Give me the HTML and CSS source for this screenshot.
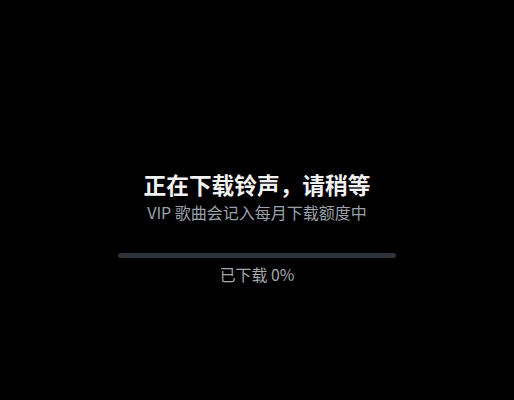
FILE: index.html
```html
<!DOCTYPE html>
<html lang="zh">
<head>
<meta charset="utf-8">
<link rel="stylesheet" href="styles.css">
</head>
<body>
<main class="screen">
  <h1 class="title">正在下载铃声，请稍等</h1>
  <p class="subtitle">VIP 歌曲会记入每月下载额度中</p>
  <div class="track"><div class="fill" style="width:0%"></div></div>
  <p class="label">已下载 0%</p>
</main>
</body>
</html>
```
FILE: styles.css
```css
html, body {
  margin: 0;
  padding: 0;
  background: #000;
}
.screen {
  width: 514px;
  height: 400px;
  display: flex;
  flex-direction: column;
  align-items: center;
  padding-top: 172px;
  box-sizing: border-box;
  font-family: "Noto Sans CJK SC", "Noto Sans", sans-serif;
}
.title {
  margin: 0;
  font-size: 22.7px;
  line-height: 26px;
  font-weight: 700;
  color: #f2f2f2;
}
.subtitle {
  margin: 5px 0 0;
  font-size: 16px;
  line-height: 19px;
  color: #9aa2ab;
}
.track {
  margin-top: 31px;
  width: 278px;
  height: 5px;
  border-radius: 3px;
  background: #2e3339;
  overflow: hidden;
}
.fill {
  height: 100%;
  background: #4a90e2;
}
.label {
  margin: 7px 0 0;
  font-size: 15.9px;
  line-height: 20px;
  color: #a4a8ad;
}
```
